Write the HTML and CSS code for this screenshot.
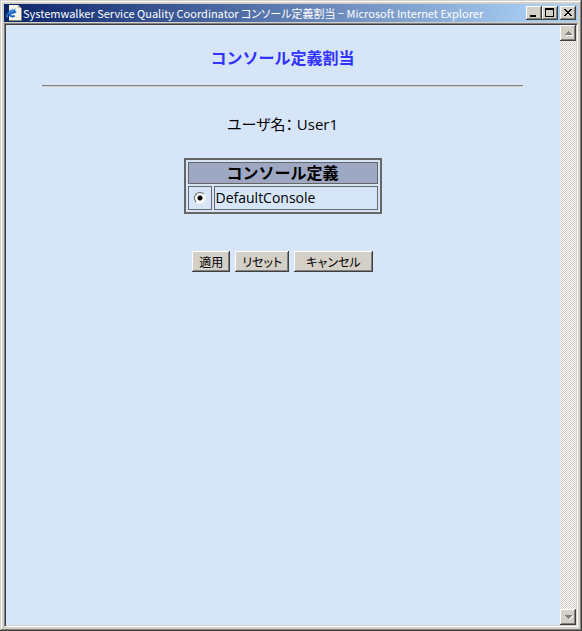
FILE: index.html
```html
<!DOCTYPE html>
<html lang="ja">
<head>
	<meta charset="UTF-8">
	<title>Systemwalker Service Quality Coordinator コンソール定義割当</title>
	<link rel="stylesheet" href="styles.css">
</head>
<body>
<div class="window">
	<div class="titlebar">
		<svg class="logo" width="16" height="16" viewBox="0 0 16 16">
			<path d="M3 0h9l3 3v13H3z" fill="#f4f3e8"/>
			<path d="M12 0v3h3z" fill="#b9b6a2"/>
			<path d="M3 15.500h12.500V3" fill="none" stroke="#8d8b7c"/>
			<path d="M8.500 10.500A3 3 0 1 1 9 7L3 9" fill="none" stroke="#1563c8" stroke-width="2"/>
			<path d="M2 12C-2 12 4 5 10 4" fill="none" stroke="#58b4f4"/>
		</svg>
		<span class="caption">Systemwalker Service Quality Coordinator <span class="ja">コンソール定義割当</span> − Microsoft Internet Explorer</span>
		<div class="controls">
			<button type="button" class="ctl" aria-label="最小化">
				<svg width="12" height="10" viewBox="0 0 12 10"><path d="M2 7h6v2H2z"/></svg>
			</button>
			<button type="button" class="ctl" aria-label="最大化">
				<svg width="12" height="10" viewBox="0 0 12 10"><path d="M1 0h9v9H1zM2 2v6h7V2z" fill-rule="evenodd"/></svg>
			</button>
			<button type="button" class="ctl close" aria-label="閉じる">
				<svg width="12" height="10" viewBox="0 0 12 10" shape-rendering="crispEdges"><path d="M2 1h2v1h1v1h2v-1h1v-1h2v1h-1v1h-1v1h-1v1h1v1h1v1h1v1h-2v-1h-1v-1h-2v1h-1v1h-2v-1h1v-1h1v-1h1v-1h-1v-1h-1v-1h-1z"/></svg>
			</button>
		</div>
	</div>
	<div class="client">
		<form class="page">
			<h1>コンソール定義割当</h1>
			<hr>
			<p class="user">ユーザ名： User1</p>
			<table>
				<tr>
					<th colspan="2">コンソール定義</th>
				</tr>
				<tr>
					<td class="pick"><input type="radio" name="console" id="console1" checked></td>
					<td class="name"><label for="console1">DefaultConsole</label></td>
				</tr>
			</table>
			<div class="buttons">
				<button type="button">適用</button>
				<button type="reset">リセット</button>
				<button type="button" class="wide">キャンセル</button>
			</div>
		</form>
		<div class="scrollbar">
			<button type="button" class="arrow" aria-label="上へ">
				<svg width="9" height="6" viewBox="0 0 9 6" shape-rendering="crispEdges"><path d="M2 5h7v1H2z" fill="#fff"/><path d="M4 1h1v1h1v1h1v1h1v1H1V4h1V3h1V2h1z" fill="#808080"/></svg>
			</button>
			<button type="button" class="arrow" aria-label="下へ">
				<svg width="9" height="6" viewBox="0 0 9 6" shape-rendering="crispEdges"><path d="M8 2h1v1H8v1H7v1H6v1H5V5h1V4h1V3h1z" fill="#fff"/><path d="M1 1h7v1H7v1H6v1H5v1H4V4H3V3H2V2H1z" fill="#808080"/></svg>
			</button>
		</div>
	</div>
</div>
</body>
</html>
```

FILE: styles.css
```css
*{
	box-sizing: border-box;
	margin: 0;
	padding: 0;
}
body{
	font-family: "Noto Sans CJK JP", sans-serif;
	font-size: 16px;
	color: #000;
}
.window{
	display: flex;
	flex-direction: column;
	min-height: 100vh;
	padding: 4px;
	background: #d4d0c8;
	box-shadow: inset -1px -1px #404040, inset 1px 1px #d4d0c8, inset -2px -2px #808080, inset 2px 2px #fff;
}

/* title bar */
.titlebar{
	display: flex;
	align-items: center;
	height: 18px;
	padding: 0 2px;
	background: linear-gradient(to right, #0a246a, #a6caf0 92%);
}
.logo{flex: none;}
.caption{
	flex: 1;
	margin-left: 1px;
	font-size: 11px;
	line-height: 18px;
	color: #fff;
	white-space: nowrap;
}
.ja{font-feature-settings: "palt";}
.controls{display: flex;}
button{
	background: #d4d0c8;
	border: 0;
	color: #000;
	box-shadow: inset -1px -1px #404040, inset 1px 1px #fff, inset -2px -2px #808080;
}
.ctl{
	display: flex;
	align-items: center;
	justify-content: center;
	width: 16px;
	height: 14px;
}
.close{margin-left: 2px;}

/* client area */
.client{
	flex: 1;
	display: flex;
	margin-top: 1px;
	border: 1px solid;
	border-color: #808080 #fff #fff #808080;
	box-shadow: inset 1px 1px #404040, inset -1px -1px #d4d0c8;
	padding: 1px;
}
.page{
	flex: 1;
	padding: 20px 37px 20px 36px;
	background: #d6e5f8;
	text-align: center;
}
h1{
	font-size: 16px;
	line-height: 24px;
	color: #33f;
}
hr{
	height: 2px;
	margin-top: 16px;
	border: 0;
	border-top: 1px solid #808080;
	border-bottom: 1px solid #d4d0c8;
}
.user{
	margin-top: 25px;
	font-family: "Open Sans", "Noto Sans CJK JP", sans-serif;
	font-size: 15px;
	line-height: 24px;
	font-feature-settings: "palt";
}
table{
	width: 198px;
	margin: 22px auto 0;
	border: 2px solid #666;
	border-spacing: 2px;
}
th, td{
	border: 1px solid #666;
	line-height: 20px;
}
th{
	padding-bottom: 2px;
	line-height: 18px;
	background: #9ea8c2;
}
td{height: 24px;}
.pick{width: 24px;}
.name{
	padding-left: 1px;
	font-family: "Open Sans", sans-serif;
	font-size: 14px;
	text-align: left;
}
input{
	appearance: none;
	display: block;
	width: 12px;
	height: 12px;
	margin: 0 auto;
	border: 1px solid;
	border-color: #606060 #f4f4f4 #f4f4f4 #606060;
	border-radius: 50%;
	background: radial-gradient(circle, #000 2px, #fff 3px);
}
.buttons{
	display: flex;
	justify-content: center;
	gap: 5px;
	margin-top: 37px;
}
.buttons button{
	height: 21px;
	padding: 0 7px;
	font-family: "Noto Sans CJK JP", sans-serif;
	font-size: 12px;
	line-height: 20px;
	font-feature-settings: "palt";
}
.buttons .wide{padding: 0 12px;}

/* scroll bar */
.scrollbar{
	display: flex;
	flex-direction: column;
	justify-content: space-between;
	width: 16px;
	background: repeating-conic-gradient(#d4d0c8 0 25%, #fff 0 50%) 0 0 / 2px 2px;
}
.arrow{
	display: flex;
	align-items: center;
	justify-content: center;
	width: 16px;
	height: 16px;
}
```
